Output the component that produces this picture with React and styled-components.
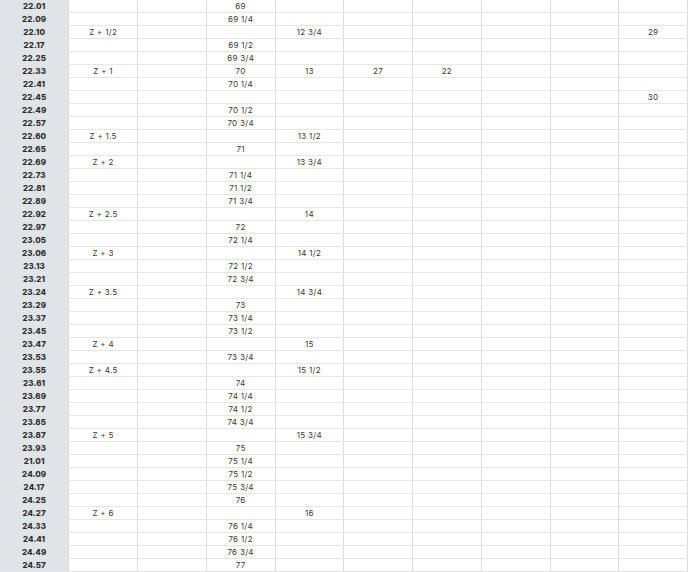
import React from "react";
import styled, { createGlobalStyle } from "styled-components";

const Global = createGlobalStyle`
  html, body { margin: 0; padding: 0; background: #fff; }
  body { font-family: Inter, "Noto Sans", sans-serif; }
`;

const Table = styled.table`
  width: 688px;
  table-layout: fixed;
  border-collapse: collapse;
  font-family: Inter, "Noto Sans", sans-serif;
  font-size: 8px;
  color: #3a3a3a;
`;

const Cell = styled.td`
  height: 12px;
  padding: 0;
  line-height: 12px;
  text-align: center;
  white-space: nowrap;
  border-bottom: 1px solid #e6e6e6;
  border-right: 1px solid #dcdcdc;
  letter-spacing: 0.3px;
`;

const KeyCell = styled(Cell)`
  background: #dfe4e9;
  font-weight: 800;
  color: #2e2e2e;
  letter-spacing: 0.1px;
`;

const rows = [
  ["22.01", "", "", "69"],
  ["22.09", "", "", "69 1/4"],
  ["22.10", "Z + 1/2", "", "", "12 3/4", "", "", "", "", "29"],
  ["22.17", "", "", "69 1/2"],
  ["22.25", "", "", "69 3/4"],
  ["22.33", "Z + 1", "", "70", "13", "27", "22"],
  ["22.41", "", "", "70 1/4"],
  ["22.45", "", "", "", "", "", "", "", "", "30"],
  ["22.49", "", "", "70 1/2"],
  ["22.57", "", "", "70 3/4"],
  ["22.60", "Z + 1.5", "", "", "13 1/2"],
  ["22.65", "", "", "71"],
  ["22.69", "Z + 2", "", "", "13 3/4"],
  ["22.73", "", "", "71 1/4"],
  ["22.81", "", "", "71 1/2"],
  ["22.89", "", "", "71 3/4"],
  ["22.92", "Z + 2.5", "", "", "14"],
  ["22.97", "", "", "72"],
  ["23.05", "", "", "72 1/4"],
  ["23.06", "Z + 3", "", "", "14 1/2"],
  ["23.13", "", "", "72 1/2"],
  ["23.21", "", "", "72 3/4"],
  ["23.24", "Z + 3.5", "", "", "14 3/4"],
  ["23.29", "", "", "73"],
  ["23.37", "", "", "73 1/4"],
  ["23.45", "", "", "73 1/2"],
  ["23.47", "Z + 4", "", "", "15"],
  ["23.53", "", "", "73 3/4"],
  ["23.55", "Z + 4.5", "", "", "15 1/2"],
  ["23.61", "", "", "74"],
  ["23.69", "", "", "74 1/4"],
  ["23.77", "", "", "74 1/2"],
  ["23.85", "", "", "74 3/4"],
  ["23.87", "Z + 5", "", "", "15 3/4"],
  ["23.93", "", "", "75"],
  ["21.01", "", "", "75 1/4"],
  ["24.09", "", "", "75 1/2"],
  ["24.17", "", "", "75 3/4"],
  ["24.25", "", "", "76"],
  ["24.27", "Z + 6", "", "", "16"],
  ["24.33", "", "", "76 1/4"],
  ["24.41", "", "", "76 1/2"],
  ["24.49", "", "", "76 3/4"],
  ["24.57", "", "", "77"],
];

export default function App() {
  return (
    <>
      <Global />
      <Table>
        <tbody>
          {rows.map((r) => {
            const cells = Array.from({ length: 10 }, (_, i) => r[i] || "");
            return (
              <tr key={r[0] + cells.join("|")}>
                <KeyCell>{cells[0]}</KeyCell>
                {cells.slice(1).map((c, i) => (
                  <Cell key={i}>{c}</Cell>
                ))}
              </tr>
            );
          })}
        </tbody>
      </Table>
    </>
  );
}
